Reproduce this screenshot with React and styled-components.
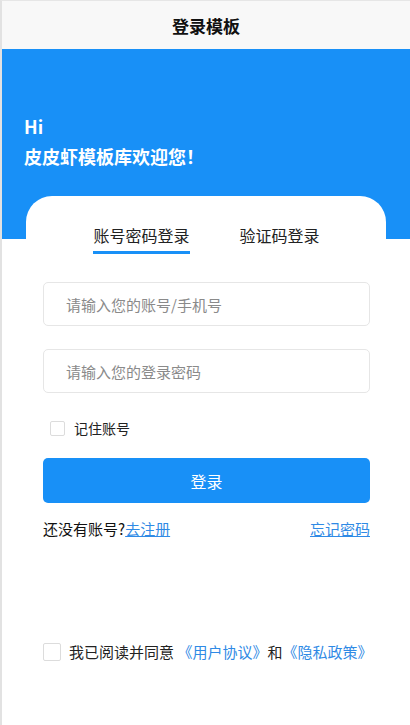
import React, { useState } from "react";
import styled, { createGlobalStyle } from "styled-components";

const GlobalStyle = createGlobalStyle`
  html, body {
    margin: 0;
    padding: 0;
    background: #fff;
  }
  body {
    font-family: "Noto Sans CJK SC", "Noto Sans", sans-serif;
    color: #333;
  }
  * {
    box-sizing: border-box;
  }
`;

const Page = styled.div`
  min-height: 725px;
  border-left: 2px solid #e2e2e2;
  border-top: 1px solid #e6e6e6;
  background: #fff;
`;

const NavBar = styled.div`
  height: 48px;
  background: #f8f8f8;
  display: flex;
  align-items: center;
  justify-content: center;
  font-size: 17px;
  font-weight: 700;
  color: #111;
`;

const Hero = styled.div`
  height: 190px;
  background: #1890f7;
  padding: 62px 0 0 22px;
  color: #fff;
  font-size: 18px;
  font-weight: 700;
  line-height: 30px;
`;

const Card = styled.div`
  position: relative;
  margin: -43px 24px 0;
  background: #fff;
  border-radius: 26px 26px 0 0;
  padding: 27px 16px 0 17px;
`;

const Tabs = styled.div`
  display: flex;
  justify-content: center;
  gap: 50px;
  margin-bottom: 28px;
`;

const Tab = styled.div`
  font-size: 16px;
  line-height: 24px;
  color: #222;
  padding-bottom: 4px;
  border-bottom: 3px solid ${(p) => (p.active ? "#1890f7" : "transparent")};
  cursor: pointer;
`;

const Field = styled.input`
  display: block;
  width: 100%;
  height: 44px;
  border: 1px solid #e6e6e6;
  border-radius: 5px;
  padding: 0 22px;
  font-family: inherit;
  font-size: 15px;
  color: #333;
  outline: none;
  margin-bottom: ${(p) => p.gap || 0}px;
  &::placeholder {
    color: #8a8a8a;
  }
`;

const CheckRow = styled.label`
  display: flex;
  align-items: center;
  gap: ${(p) => p.gap}px;
  font-size: ${(p) => p.size}px;
  color: #222;
  white-space: nowrap;
  padding-left: ${(p) => p.indent || 0}px;
`;

const Box = styled.span`
  width: ${(p) => p.size}px;
  height: ${(p) => p.size}px;
  border: 1px solid #dcdcdc;
  border-radius: 2px;
  background: ${(p) => (p.checked ? "#1890f7" : "#fff")};
  flex-shrink: 0;
`;

const Remember = styled.div`
  margin: 25px 0 20px;
`;

const LoginButton = styled.button`
  display: block;
  width: 100%;
  height: 45px;
  border: none;
  border-radius: 5px;
  background: #1890f7;
  color: #fff;
  font-family: inherit;
  font-size: 16px;
  cursor: pointer;
`;

const LinkRow = styled.div`
  display: flex;
  justify-content: space-between;
  align-items: center;
  margin-top: 14px;
  font-size: 15px;
  line-height: 24px;
  color: #111;
`;

const Link = styled.a`
  color: #2f8ae5;
  text-decoration: underline;
  cursor: pointer;
`;

const Agreement = styled.div`
  margin-top: 100px;
`;

const Blue = styled.span`
  color: #2f8ae5;
`;

export default function App() {
  const [remember, setRemember] = useState(false);
  const [agree, setAgree] = useState(false);

  return (
    <>
      <GlobalStyle />
      <Page>
        <NavBar>登录模板</NavBar>
        <Hero>
          <div>Hi</div>
          <div>皮皮虾模板库欢迎您！</div>
        </Hero>
        <Card>
          <Tabs>
            <Tab active>账号密码登录</Tab>
            <Tab>验证码登录</Tab>
          </Tabs>
          <Field gap={23} placeholder="请输入您的账号/手机号" />
          <Field type="password" placeholder="请输入您的登录密码" />
          <Remember>
            <CheckRow gap={9} size={14} indent={7} onClick={() => setRemember(!remember)}>
              <Box size={15} checked={remember} />
              记住账号
            </CheckRow>
          </Remember>
          <LoginButton>登录</LoginButton>
          <LinkRow>
            <span>
              还没有账号?<Link>去注册</Link>
            </span>
            <Link>忘记密码</Link>
          </LinkRow>
          <Agreement>
            <CheckRow gap={8} size={15} onClick={() => setAgree(!agree)}>
              <Box size={18} checked={agree} />
              <span>
                我已阅读并同意 <Blue>《用户协议》</Blue>和<Blue>《隐私政策》</Blue>
              </span>
            </CheckRow>
          </Agreement>
        </Card>
      </Page>
    </>
  );
}
